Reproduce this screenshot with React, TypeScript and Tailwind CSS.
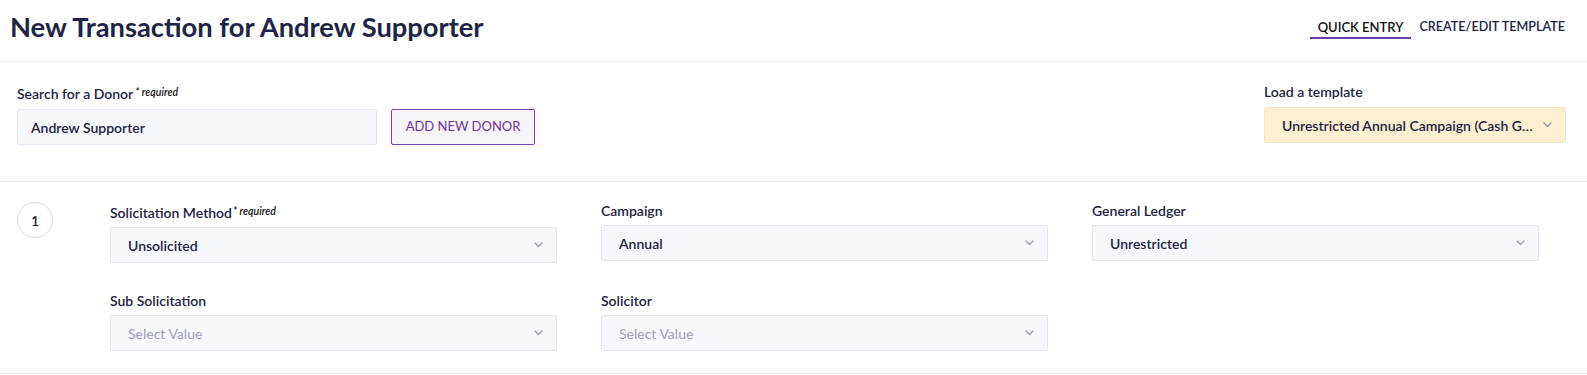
import React from "react";

type Field = {
  label: string;
  required?: boolean;
  value?: string;
};

const fields: Field[] = [
  { label: "Solicitation Method", required: true, value: "Unsolicited" },
  { label: "Campaign", value: "Annual" },
  { label: "General Ledger", value: "Unrestricted" },
  { label: "Sub Solicitation" },
  { label: "Solicitor" },
];

function Chevron() {
  return (
    <svg width="9" height="6" viewBox="0 0 9 6" fill="none" className="shrink-0">
      <path d="M1 1l3.5 3.5L8 1" stroke="#9aa0b3" strokeWidth="1.4" strokeLinecap="round" strokeLinejoin="round" />
    </svg>
  );
}

function Required({ spaced }: { spaced?: boolean }) {
  return (
    <span className={`${spaced ? "ml-[2px]" : "ml-[1px]"} text-[10.5px] italic font-semibold text-[#111] align-[3px]`}>
      * required
    </span>
  );
}

function Select({ value, className = "" }: { value?: string; className?: string }) {
  return (
    <div
      className={`flex items-center justify-between gap-2 h-[36px] pl-[17px] pr-[13px] border border-[#e3e6ee] rounded-[2px] ${className}`}
    >
      {value ? (
        <span className="text-[14px] font-semibold text-[#1d2340] truncate">{value}</span>
      ) : (
        <span className="text-[14px] text-[#9ba1b4]">Select Value</span>
      )}
      <Chevron />
    </div>
  );
}

export default function App() {
  return (
    <div className="w-[1587px] bg-white font-['Lato',sans-serif] text-[#1d2340]">
      {/* Header */}
      <div className="flex items-start justify-between h-[62px] pl-[10px] pr-[14px] border-b border-[#ececf0]">
        <h1 className="mt-[10px] text-[27.3px] leading-[34px] font-bold text-[#1e2446]">
          New Transaction for Andrew Supporter
        </h1>
        <div className="flex mt-[17px] text-[13px] leading-[20px] font-semibold">
          <div className="px-[8px] border-b-2 border-[#6a3aa6] text-[#111]">QUICK ENTRY</div>
          <div className="px-[8px] border-b-2 border-transparent text-[12.6px] text-[#1e2446]">CREATE/EDIT TEMPLATE</div>
        </div>
      </div>

      {/* Donor search */}
      <div className="flex justify-between pl-[17px] pr-[21px] pt-[20px] pb-[36px] border-b border-[#e6e8ee]">
        <div>
          <div className="text-[14px] leading-[20px] font-semibold mb-[5px]">
            Search for a Donor
            <Required spaced />
          </div>
          <div className="flex gap-[14px]">
            <div className="flex items-center w-[360px] h-[36px] pl-[13px] bg-[#f7f8fb] border border-[#e3e6ee] rounded-[2px]">
              <span className="text-[14px] font-semibold">Andrew Supporter</span>
            </div>
            <button className="w-[144px] h-[36px] border border-[#7745b0] bg-[#f7f4fa] rounded-[2px] text-[13px] text-[#6a34a3]">
              ADD NEW DONOR
            </button>
          </div>
        </div>
        <div className="w-[302px]">
          <div className="text-[14px] leading-[20px] font-semibold mb-[5px]">Load a template</div>
          <Select value="Unrestricted Annual Campaign (Cash Gifts)" className="bg-[#fdefcf] border-[#f3e6c6]" />
        </div>
      </div>

      {/* Line 1 */}
      <div className="flex pl-[17px] pt-[19px] pb-[22px] border-b border-[#e6e8ee]">
        <div className="w-[93px] pt-[1px]">
          <div className="flex items-center justify-center w-[36px] h-[36px] rounded-full border border-[#d5d9e3] text-[14px] font-semibold">
            1
          </div>
        </div>
        <div className="grid grid-cols-[447px_447px_447px] gap-x-[44px] gap-y-[28px]">
          {fields.map((f) => (
            <div key={f.label}>
              <div className="text-[14px] leading-[20px] font-semibold mb-[4px]">
                {f.label}
                {f.required && <Required />}
              </div>
              <Select value={f.value} className="bg-[#f7f8fb]" />
            </div>
          ))}
        </div>
      </div>
    </div>
  );
}
